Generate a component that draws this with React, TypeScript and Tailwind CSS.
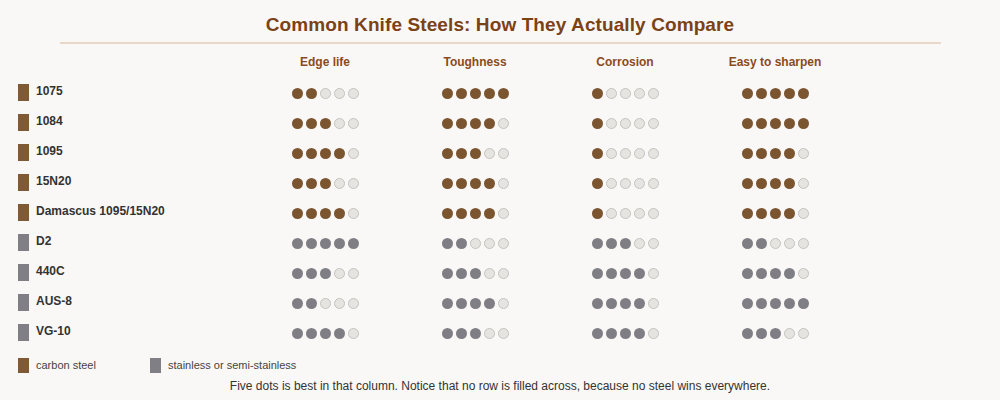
import React from "react";

// ─── Data ────────────────────────────────────────────────────────────────

type Kind = "carbon" | "stainless";

const columns = ["Edge life", "Toughness", "Corrosion", "Easy to sharpen"];

const steels: { name: string; kind: Kind; scores: number[] }[] = [
  { name: "1075", kind: "carbon", scores: [2, 5, 1, 5] },
  { name: "1084", kind: "carbon", scores: [3, 4, 1, 5] },
  { name: "1095", kind: "carbon", scores: [4, 3, 1, 4] },
  { name: "15N20", kind: "carbon", scores: [3, 4, 1, 4] },
  { name: "Damascus 1095/15N20", kind: "carbon", scores: [4, 4, 1, 4] },
  { name: "D2", kind: "stainless", scores: [5, 2, 3, 2] },
  { name: "440C", kind: "stainless", scores: [3, 3, 4, 4] },
  { name: "AUS-8", kind: "stainless", scores: [2, 4, 4, 5] },
  { name: "VG-10", kind: "stainless", scores: [4, 3, 4, 3] },
];

const Dots = ({ value, kind }: { value: number; kind: Kind }) => (
  <div className="flex items-center justify-center gap-[3px] pl-[1px]">
    {[1, 2, 3, 4, 5].map((i) =>
      i <= value ? (
        <span
          key={i}
          className={
            kind === "carbon"
              ? "w-[11px] h-[11px] rounded-full bg-[#7b5430]"
              : "w-[11px] h-[11px] rounded-full bg-[#7f7e84]"
          }
        />
      ) : (
        <span
          key={i}
          className="w-[11px] h-[11px] rounded-full bg-[#e6e4e1] border border-[#c6c3bf]"
        />
      )
    )}
  </div>
);

const Swatch = ({ kind, tall }: { kind: Kind; tall?: boolean }) => (
  <span
    className={[
      "w-[11px] shrink-0",
      tall ? "h-[17px]" : "h-[15px]",
      kind === "carbon" ? "bg-[#7f5a34]" : "bg-[#807f85]",
    ].join(" ")}
  />
);

export default function App() {
  return (
    <div className="w-[1000px] h-[400px] bg-[#faf8f6] overflow-hidden font-['Liberation_Sans',Arial,sans-serif]">
      {/* ── Title ── */}
      <h1 className="pt-[13px] text-center text-[19px] tracking-[0.1px] leading-[24px] font-bold text-[#7b4216]">
        Common Knife Steels: How They Actually Compare
      </h1>
      <div className="mt-[5px] ml-[60px] w-[881px] h-[2px] bg-[#e9d7c7]" />

      {/* ── Column headers ── */}
      <div className="grid grid-cols-[250px_150px_150px_150px_150px] h-[33px] pt-[11px]">
        <div />
        {columns.map((c) => (
          <div
            key={c}
            className="text-center text-[12px] leading-[14px] font-bold text-[#8a4b1c]"
          >
            {c}
          </div>
        ))}
      </div>

      {/* ── Rows ── */}
      {steels.map((s) => (
        <div
          key={s.name}
          className="grid grid-cols-[250px_150px_150px_150px_150px] h-[30px] items-center"
        >
          <div className="flex items-center gap-[7px] pl-[18px]">
            <Swatch kind={s.kind} tall />
            <span className="text-[12px] leading-[14px] font-bold text-[#333333] -mt-[2px]">
              {s.name}
            </span>
          </div>
          {s.scores.map((v, i) => (
            <div key={i} className="pt-[2px]">
              <Dots value={v} kind={s.kind} />
            </div>
          ))}
        </div>
      ))}

      {/* ── Legend ── */}
      <div className="flex items-center pl-[18px] pt-[11px]">
        <div className="flex items-center gap-[7px] w-[132px]">
          <Swatch kind="carbon" />
          <span className="text-[11px] leading-[14px] text-[#444444] -mt-[2px]">
            carbon steel
          </span>
        </div>
        <div className="flex items-center gap-[7px]">
          <Swatch kind="stainless" />
          <span className="text-[11px] leading-[14px] text-[#444444] -mt-[2px]">
            stainless or semi-stainless
          </span>
        </div>
      </div>

      <p className="mt-[6px] text-center text-[12px] leading-[14px] text-[#333333]">
        Five dots is best in that column. Notice that no row is filled across,
        because no steel wins everywhere.
      </p>
    </div>
  );
}
